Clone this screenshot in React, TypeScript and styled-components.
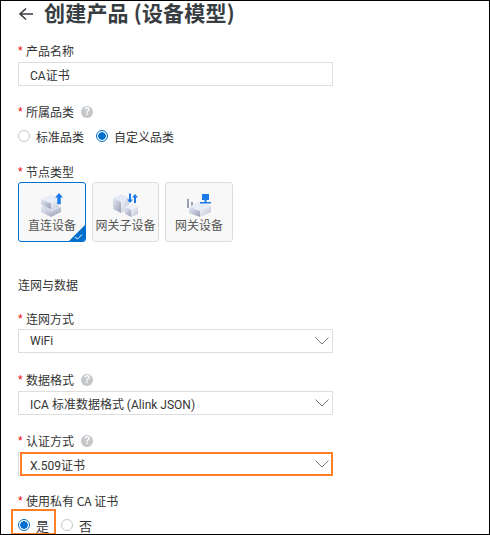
import React from "react";
import styled, { createGlobalStyle } from "styled-components";

const GlobalStyles = createGlobalStyle`
  * {
    margin: 0;
    padding: 0;
    box-sizing: border-box;
  }
  body {
    background: #fff;
    font-family: "Noto Sans CJK SC", "Liberation Sans", sans-serif;
  }
`;

const Frame = styled.div`
  position: relative;
  width: 490px;
  height: 535px;
  padding: 0 17px;
  border: 1px solid #000;
  overflow: hidden;
  background: #fff;
  color: #333;
  font-size: 12px;
`;

const TitleRow = styled.div`
  display: flex;
  align-items: center;
  gap: 10px;
  height: 25px;
  margin-bottom: 17px;
`;

const Title = styled.h1`
  align-self: flex-start;
  font-size: 21px;
  font-weight: 700;
  letter-spacing: 0.2px;
  line-height: 23px;
  color: #373d41;
  white-space: nowrap;
`;

const Field = styled.div<{ $top?: number; $gap?: number }>`
  display: flex;
  flex-direction: column;
  gap: ${(p) => p.$gap ?? 3}px;
  margin-top: ${(p) => p.$top ?? 18}px;
`;

const Label = styled.div`
  display: flex;
  align-items: center;
  height: 16px;
  line-height: 16px;
  font-size: 12px;
  color: #333;
`;

const Star = styled.span`
  width: 6px;
  margin-right: 2px;
  color: #e00;
  font-family: "Liberation Sans", sans-serif;
`;

const Help = styled.span`
  display: inline-flex;
  align-items: center;
  justify-content: center;
  width: 12px;
  height: 12px;
  margin-left: 7px;
  border-radius: 50%;
  background: #c4c6c7;
  color: #fff;
  font-family: "Liberation Sans", sans-serif;
  font-size: 10px;
  font-weight: 700;
  line-height: 12px;
`;

const Control = styled.div`
  position: relative;
  display: flex;
  align-items: center;
  justify-content: space-between;
  width: 315px;
  height: 24px;
  padding: 0 3px 0 11px;
  border: 1px solid #dedede;
  font-family: Roboto, "Noto Sans CJK SC", sans-serif;
  font-size: 12px;
  color: #333;
`;

const Highlight = styled.div`
  position: absolute;
  top: -1px;
  right: -1px;
  bottom: -1px;
  left: 1px;
  border: 2px solid #ff7f27;
`;

const RadioRow = styled.div`
  display: flex;
  align-items: center;
  height: 20px;
`;

const RadioItem = styled.label<{ $big?: boolean }>`
  display: flex;
  align-items: center;
  gap: 6px;
  margin-right: 12px;
  font-size: ${(p) => (p.$big ? 13 : 12)}px;
  color: #333;
`;

const RadioMark = styled.span<{ $on?: boolean }>`
  display: inline-block;
  width: 12px;
  height: 12px;
  border-radius: 50%;
  border: 1px solid ${(p) => (p.$on ? "#0070cc" : "#c4c6c7")};
  background: ${(p) =>
    p.$on ? "radial-gradient(circle, #0070cc 0 3.5px, #fff 4px)" : "#fff"};
`;

const PickBox = styled.div`
  position: absolute;
  left: 10px;
  bottom: -1px;
  width: 45px;
  height: 26px;
  border: 2px solid #ff7f27;
`;

const Cards = styled.div`
  display: flex;
  gap: 6px;
`;

const Card = styled.div<{ $on?: boolean; $w?: number }>`
  position: relative;
  display: flex;
  flex-direction: column;
  align-items: center;
  width: ${(p) => p.$w ?? 68}px;
  height: 60px;
  padding-top: 10px;
  border: 1px solid ${(p) => (p.$on ? "#0070cc" : "#dcdcdc")};
  border-radius: 3px;
  background: #f8f8f8;
  overflow: hidden;
`;

const CardText = styled.div`
  font-size: 12px;
  line-height: 16px;
  color: #555;
  white-space: nowrap;
`;

const Corner = styled.svg`
  position: absolute;
  right: 0;
  bottom: 0;
`;

const Section = styled.h2`
  height: 16px;
  margin-top: 35px;
  font-size: 12px;
  font-weight: 400;
  line-height: 16px;
  color: #333;
`;

const Arrow = () => (
  <svg width="16" height="14" viewBox="0 0 16 14" fill="none" stroke="#373d41" strokeWidth="1.6">
    <path d="M15 7H2M8 1.500 2 7l6 5.500" />
  </svg>
);

const Chevron = () => (
  <svg width="14" height="8" viewBox="0 0 14 8" fill="none" stroke="#777" strokeWidth="1">
    <path d="M.5.5 7 7 13.500.5" />
  </svg>
);

const Defs = () => (
  <defs>
    <linearGradient id="faceL" x1="0" y1="0" x2="1" y2="1">
      <stop offset="0" stopColor="#e6eaf6" />
      <stop offset="1" stopColor="#98a0b5" />
    </linearGradient>
    <linearGradient id="faceR" x1="0" y1="0" x2="1" y2="1">
      <stop offset="0" stopColor="#f4f6fb" />
      <stop offset="1" stopColor="#bcc3d3" />
    </linearGradient>
  </defs>
);

const DirectIcon = () => (
  <svg width="24" height="24" viewBox="0 0 24 24">
    <Defs />
    <path d="M1 14l10 4.500L21 14v5l-10 5-10-5z" fill="url(#faceL)" />
    <path d="M1 14l10-4 10 4-10 4.500z" fill="#d4d9e8" />
    <path d="M1 6l10-4.500L21 6l-10 4.500z" fill="#e9edf8" />
    <path d="M1 6l10 4.500V16L1 11.500z" fill="url(#faceL)" />
    <path d="M21 6l-10 4.500V16l10-4.500z" fill="url(#faceR)" />
    <path d="M15 4.500 19 0l4 4.500h-2.300V11h-3.400V4.500z" fill="#1b7be8" />
  </svg>
);

const SubDeviceIcon = () => (
  <svg width="26" height="24" viewBox="0 0 26 24">
    <Defs />
    <path d="M0 5l8-4 8 4-8 4z" fill="#e6eaf6" />
    <path d="M0 5l8 4v11l-8-4z" fill="url(#faceL)" />
    <path d="M16 5l-8 4v11l8-4z" fill="url(#faceR)" />
    <path d="M12 14l6.500-3 6.500 3-6.500 3z" fill="#eef1f9" />
    <path d="M12 14l6.500 3v7L12 21z" fill="url(#faceL)" />
    <path d="M25 14l-6.500 3v7l6.500-3z" fill="url(#faceR)" />
    <path d="M16 .5h2v6h2l-3 3.500-3-3.500h2zM21 10h2V4.500h2L22 1l-3 3.500h2z" fill="#1b7be8" />
  </svg>
);

const GatewayIcon = () => (
  <svg width="26" height="24" viewBox="0 0 26 24">
    <Defs />
    <path d="M1 6h2v9H1zM5 9h2v7H5z" fill="#9aa1b3" />
    <path d="M3 14l11-6 11 5-11 5z" fill="#e9edf8" />
    <path d="M3 14l11 4v6L3 20z" fill="url(#faceL)" />
    <path d="M25 13l-11 5v6l11-5z" fill="url(#faceR)" />
    <path d="M16 1h7v6h-2.500v2H25v1.500H14V9h4.500V7H16z" fill="#1b7be8" />
  </svg>
);

const App = () => {
  return (
    <>
      <GlobalStyles />
      <Frame>
        <TitleRow>
          <Arrow />
          <Title>创建产品 (设备模型)</Title>
        </TitleRow>

        <Field $top={0}>
          <Label><Star>*</Star>产品名称</Label>
          <Control>CA证书</Control>
        </Field>

        <Field $gap={6}>
          <Label><Star>*</Star>所属品类<Help>?</Help></Label>
          <RadioRow>
            <RadioItem><RadioMark />标准品类</RadioItem>
            <RadioItem><RadioMark $on />自定义品类</RadioItem>
          </RadioRow>
        </Field>

        <Field $gap={2}>
          <Label><Star>*</Star>节点类型</Label>
          <Cards>
            <Card $on>
              <DirectIcon />
              <CardText>直连设备</CardText>
              <Corner width="16" height="16" viewBox="0 0 16 16">
                <path d="M16 0v16H0z" fill="#0070cc" />
                <path d="M6 12l2.500 2L13 9.500" fill="none" stroke="#fff" strokeWidth="1" />
              </Corner>
            </Card>
            <Card $w={67}>
              <SubDeviceIcon />
              <CardText>网关子设备</CardText>
            </Card>
            <Card>
              <GatewayIcon />
              <CardText>网关设备</CardText>
            </Card>
          </Cards>
        </Field>

        <Section>连网与数据</Section>

        <Field $gap={2}>
          <Label><Star>*</Star>连网方式</Label>
          <Control>WiFi<Chevron /></Control>
        </Field>

        <Field $top={19}>
          <Label><Star>*</Star>数据格式<Help>?</Help></Label>
          <Control>ICA 标准数据格式 (Alink JSON)<Chevron /></Control>
        </Field>

        <Field>
          <Label><Star>*</Star>认证方式<Help>?</Help></Label>
          <Control>
            X.509证书<Chevron />
            <Highlight />
          </Control>
        </Field>

        <Field $top={17} $gap={6}>
          <Label><Star>*</Star>使用私有 CA 证书</Label>
          <RadioRow>
            <RadioItem $big><RadioMark $on />是</RadioItem>
            <RadioItem $big><RadioMark />否</RadioItem>
          </RadioRow>
        </Field>

        <PickBox />
      </Frame>
    </>
  );
};

export default App;
